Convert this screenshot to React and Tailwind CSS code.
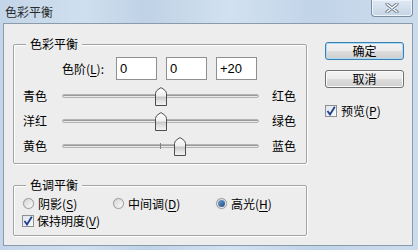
import React from "react";

const F = { fontFamily: '"Noto Sans CJK SC", "Noto Sans", sans-serif' };

function U({ children }) {
  return <span className="underline underline-offset-2">{children}</span>;
}

function Thumb() {
  return (
    <svg width="12" height="19" viewBox="0 0 12 19">
      <defs>
        <linearGradient id="tg" x1="0" y1="0" x2="0" y2="1">
          <stop offset="0" stopColor="#ffffff" />
          <stop offset="0.45" stopColor="#f0f0f0" />
          <stop offset="0.55" stopColor="#c9c9c9" />
          <stop offset="0.75" stopColor="#e2e2e2" />
          <stop offset="1" stopColor="#f4f4f4" />
        </linearGradient>
      </defs>
      <path
        d="M0.5 18.5 V6.5 Q0.5 4.2 3 2.6 L6 0.6 L9 2.6 Q11.5 4.2 11.5 6.5 V18.5 Z"
        fill="url(#tg)"
        stroke="#4d4d4d"
        strokeWidth="1"
      />
    </svg>
  );
}

function Slider({ left, label, right, tick }) {
  return (
    <div className="flex items-center h-[25px] pl-[9px]">
      <span className="w-[39px] text-[12px] leading-none">{label}</span>
      <div className="relative w-[197px] h-[4px] rounded-full border border-[#b4b4b4] bg-[#e9e9e9] shadow-[inset_0_1px_0_#9a9a9a]">
        {tick && <div className="absolute left-[97px] top-[-2px] w-[1px] h-[6px] bg-[#808080]" />}
        <div className="absolute top-[-8px]" style={{ left }}>
          <Thumb />
        </div>
      </div>
      <span className="ml-[13px] text-[12px] leading-none">{right}</span>
    </div>
  );
}

function Check() {
  return (
    <div className="w-[12px] h-[12px] border border-[#8e8f8f] bg-gradient-to-br from-[#dfe6ee] to-[#f7f9fb] flex items-center justify-center">
      <svg width="10" height="10" viewBox="0 0 10 10">
        <path d="M1.5 5 L4 8.5 L8.8 0.8" fill="none" stroke="#213f8f" strokeWidth="1.8" />
      </svg>
    </div>
  );
}

function Radio({ checked }) {
  return (
    <div className="w-[11px] h-[11px] rounded-full border border-[#9a9a9a] bg-gradient-to-br from-[#d4d4d4] to-[#fbfbfb] flex items-center justify-center shadow-[0_0_1px_#c0c0c0]">
      {checked && (
        <div className="w-[7px] h-[7px] rounded-full bg-gradient-to-br from-[#6fa2d3] to-[#1b4f82]" />
      )}
    </div>
  );
}

function Button({ children, def }) {
  return (
    <div
      className={
        "w-[79px] h-[18px] rounded-[3px] border flex items-center justify-center text-[12px] leading-none bg-[linear-gradient(#f3f3f3_0%,#ebebeb_50%,#dddddd_51%,#cfcfcf_100%)] " +
        (def
          ? "border-[#3c7fb1] shadow-[inset_0_0_0_1px_#a9dbf6]"
          : "border-[#707070] shadow-[inset_0_0_0_1px_#fbfbfb]")
      }
    >
      {children}
    </div>
  );
}

export default function App() {
  return (
    <div
      className="w-[418px] h-[250px] flex flex-col overflow-hidden bg-[linear-gradient(90deg,#c3d5e8_0%,#cfdfef_20%,#bfd2e6_35%,#d2e1f0_55%,#c1d4e8_75%,#ccdcec_100%)] text-black"
      style={F}
    >
      <div className="h-[23px] flex items-start justify-between shrink-0">
        <span className="pl-[5px] pt-[6px] text-[12px] leading-none text-[#2a2a2a]">色彩平衡</span>
        <div className="mr-[5px] w-[42px] h-[17px] border border-t-0 border-[#7d8ea3] rounded-b-[4px] bg-[linear-gradient(#dfe9f3,#c5d5e6)] flex items-center justify-center shadow-[inset_0_0_0_1px_#eef4fa]">
          <svg width="14" height="10" viewBox="0 0 14 10">
            <path d="M2 1 L12 9 M12 1 L2 9" stroke="#6c7a89" strokeWidth="3.2" strokeLinecap="round" />
            <path d="M2 1 L12 9 M12 1 L2 9" stroke="#ffffff" strokeWidth="1.4" strokeLinecap="round" />
          </svg>
        </div>
      </div>
      <div className="flex-1 ml-[3px] mr-[5px] mb-[4px] border border-[#8b9bae] bg-[#ededed] flex">
        <div className="pl-[9px] flex flex-col">
          <div className="relative mt-[20px] w-[294px] h-[120px] border border-[#a3a3a3] rounded-[2px] shadow-[inset_1px_1px_0_#fff,1px_1px_0_#fff]">
            <span className="absolute left-[12px] top-[-8px] px-[4px] bg-[#ededed] text-[12px] leading-[14px]">色彩平衡</span>
            <div className="flex items-center mt-[12px] pl-[48px]">
              <span className="w-[48px] text-[12px] leading-none">
                色阶(<U>L</U>):
              </span>
              <div className="flex gap-[9px] ml-[6px]">
                {["0", "0", "+20"].map((v, i) => (
                  <div
                    key={i}
                    className="w-[41px] h-[23px] bg-white border border-[#8e8f8f] flex items-center pl-[3px] text-[13px]"
                    style={{ fontFamily: '"Liberation Sans", Arial, sans-serif' }}
                  >
                    {v}
                  </div>
                ))}
              </div>
            </div>
            <div className="mt-[3px] flex flex-col">
              <Slider left="92px" label="青色" right="红色" />
              <Slider left="92px" label="洋红" right="绿色" />
              <Slider left="111px" label="黄色" right="蓝色" tick />
            </div>
          </div>
          <div className="relative mt-[21px] w-[294px] h-[51px] border border-[#a3a3a3] rounded-[2px] shadow-[inset_1px_1px_0_#fff,1px_1px_0_#fff]">
            <span className="absolute left-[12px] top-[-8px] px-[4px] bg-[#ededed] text-[12px] leading-[14px]">色调平衡</span>
            <div className="flex items-center mt-[12px] pl-[9px] h-[11px]">
              <div className="w-[90px] flex items-center gap-[4px]">
                <Radio />
                <span className="text-[12px] leading-none">
                  阴影(<U>S</U>)
                </span>
              </div>
              <div className="w-[103px] flex items-center gap-[4px]">
                <Radio />
                <span className="text-[12px] leading-none">
                  中间调(<U>D</U>)
                </span>
              </div>
              <div className="flex items-center gap-[4px]">
                <Radio checked />
                <span className="text-[12px] leading-none">
                  高光(<U>H</U>)
                </span>
              </div>
            </div>
            <div className="flex items-center mt-[6px] pl-[8px] gap-[3px]">
              <Check />
              <span className="text-[12px] leading-none">
                保持明度(<U>V</U>)
              </span>
            </div>
          </div>
        </div>
        <div className="ml-[18px] flex flex-col">
          <div className="mt-[18px]">
            <Button def>确定</Button>
          </div>
          <div className="mt-[10px]">
            <Button>取消</Button>
          </div>
          <div className="mt-[17px] flex items-center gap-[4px]">
            <Check />
            <span className="text-[12px] leading-none">
              预览(<U>P</U>)
            </span>
          </div>
        </div>
      </div>
    </div>
  );
}
